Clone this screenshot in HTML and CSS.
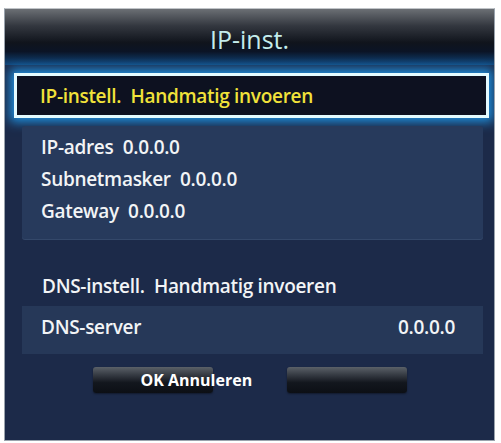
FILE: index.html
```html
<!DOCTYPE html>
<html lang="nl">
<head>
    <meta charset="UTF-8">
    <meta name="viewport" content="width=device-width, initial-scale=1.0">
    <title>IP-inst.</title>
    <link rel="stylesheet" href="styles.css">
</head>
<body>
    <div class="dialog">
        <div class="header">
            <h2>IP-inst.</h2>
        </div>

        <div class="selected-row">IP-instell.&nbsp; Handmatig invoeren</div>

        <div class="info-box">
            <p>IP-adres&nbsp; 0.0.0.0</p>
            <p>Subnetmasker&nbsp; 0.0.0.0</p>
            <p>Gateway&nbsp; 0.0.0.0</p>
        </div>

        <p class="dns-line">DNS-instell.&nbsp; Handmatig invoeren</p>

        <div class="dns-row">
            <span>DNS-server</span>
            <span>0.0.0.0</span>
        </div>

        <div class="buttons">
            <button class="btn btn-ok">OK Annuleren</button>
            <button class="btn"></button>
        </div>
    </div>
</body>
</html>
```

FILE: styles.css
```css
body {
    margin: 0;
    background: #ffffff;
    font-family: 'Open Sans', 'Noto Sans', sans-serif;
}
.dialog {
    width: 489px;
    height: 431px;
    margin: 8px 0 0 4px;
    background-color: #1c2a49;
    border: 1px solid #9aa3ad;
    border-top-color: #c0c4c8;
    overflow: hidden;
    color: #f2f4f6;
    font-size: 19px;
    font-weight: 600;
    letter-spacing: -0.3px;
}
.header {
    height: 56px;
    display: flex;
    align-items: center;
    justify-content: center;
    background: linear-gradient(#6b6f74 0%, #33373f 30%, #10141c 60%, #0b1426 76%, #12467a 100%);
}
.header h2 {
    margin: 3px 0 0 0;
    font-weight: normal;
    font-size: 25px;
    letter-spacing: 0;
    color: #c4ecec;
}
.selected-row {
    height: 39px;
    margin: 8px 5px 0 9px;
    padding-left: 23px;
    line-height: 41px;
    background-color: #0d1120;
    border: 3px solid #e4fbff;
    box-shadow: 0 0 10px 4px #1f8fdc;
    color: #f1e23a;
}
.info-box {
    height: 96px;
    margin: 8px 11px 0 17px;
    padding: 5px 19px 12px;
    background-color: #273a5c;
    border-radius: 3px;
    box-shadow: 0 1px 0 #34486a;
}
.info-box p {
    margin: 0;
    line-height: 32px;
}
.dns-line {
    margin: 31px 0 0 0;
    padding-left: 37px;
    line-height: 32px;
}
.dns-row {
    display: flex;
    justify-content: space-between;
    margin: 4px 11px 0 17px;
    padding: 5px 28px 11px 19px;
    line-height: 32px;
    background-color: #263858;
}
.buttons {
    display: flex;
    justify-content: center;
    gap: 74px;
    margin-top: 13px;
}
.btn {
    width: 120px;
    height: 26px;
    padding: 0;
    border: none;
    border-radius: 3px;
    background: linear-gradient(#5b6168 0%, #30353d 35%, #13171e 60%, #0c0f15 100%);
    box-shadow: 0 1px 2px rgba(0,0,0,0.4);
    color: #ffffff;
    font-family: 'Open Sans', 'Noto Sans', sans-serif;
    font-weight: 700;
    font-size: 16px;
    text-align: left;
    white-space: nowrap;
}
.btn-ok {
    padding-left: 48px;
    overflow: visible;
    position: relative;
    z-index: 1;
}
```
